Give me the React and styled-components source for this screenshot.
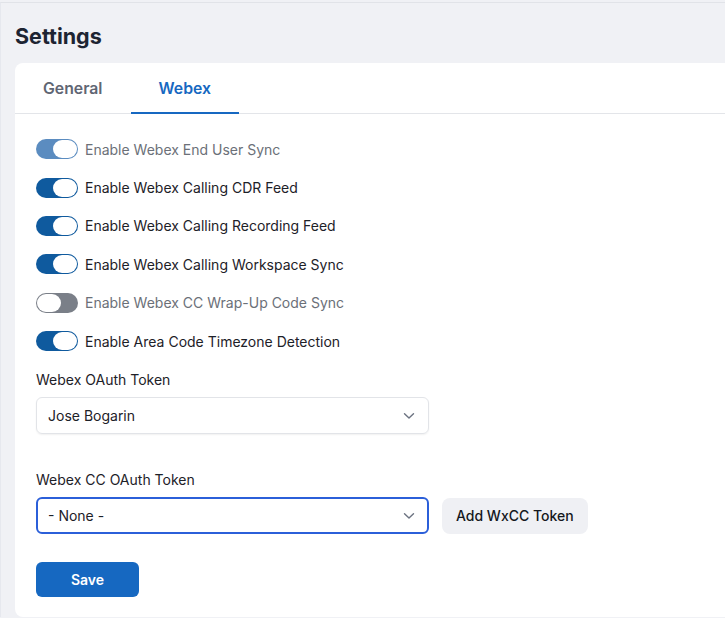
import React from "react";
import styled, { createGlobalStyle } from "styled-components";

const Global = createGlobalStyle`
  html, body { margin: 0; padding: 0; background: #f0f1f5; overflow: hidden; }
  body { font-family: Inter, "Noto Sans", sans-serif; -webkit-font-smoothing: antialiased; }
`;

const Page = styled.div`
  margin-top: 2px;
  border-top: 1px solid #e1e3e8;
  border-left: 1px solid #e6e8ee;
  min-height: 615px;
  padding: 0 0 0 14px;
  box-sizing: border-box;
`;

const Title = styled.h1`
  margin: 0;
  padding-top: 19px;
  height: 41px;
  font-size: 21.5px;
  line-height: 28px;
  font-weight: 700;
  color: #1d2432;
`;

const Card = styled.div`
  background: #fff;
  border-radius: 8px;
  margin-right: -30px;
  height: 554px;
`;

const TabBar = styled.div`
  display: flex;
  height: 50px;
  border-bottom: 1px solid #e3e5e9;
  box-sizing: content-box;
`;

const Tab = styled.div`
  padding: 0 28px;
  display: flex;
  align-items: center;
  font-size: 15.8px;
  font-weight: 600;
  color: ${p => (p.$active ? "#1668c1" : "#5f6673")};
  border-bottom: 2px solid ${p => (p.$active ? "#1668c1" : "transparent")};
  margin-bottom: -1px;
  padding-top: 1px;
`;

const Body = styled.div`
  padding: 16px 0 0 21px;
  display: flex;
  flex-direction: column;
`;

const ToggleRow = styled.div`
  height: 38.4px;
  display: flex;
  align-items: center;
  gap: 7px;
`;

const Track = styled.span`
  position: relative;
  width: 42px;
  height: 20px;
  border-radius: 10px;
  box-sizing: border-box;
  background: ${p => (p.$on ? (p.$muted ? "#5b8cc0" : "#0f5a9e") : "#7a7f88")};
  flex-shrink: 0;
`;

const Knob = styled.span`
  position: absolute;
  top: 1px;
  ${p => (p.$on ? "right: 1px;" : "left: 1px;")}
  width: 24px;
  height: 18px;
  border-radius: 9px;
  background: #fff;
`;

const ToggleLabel = styled.span`
  font-size: 14px;
  color: ${p => (p.$muted ? "#6b7078" : "#1d2128")};
`;

const FieldLabel = styled.div`
  font-size: 14px;
  line-height: 20px;
  color: #1d2128;
  margin-top: ${p => p.$top}px;
`;

const FieldRow = styled.div`
  display: flex;
  align-items: center;
  gap: 13px;
  margin-top: 7px;
`;

const Select = styled.div`
  width: 393px;
  height: 37px;
  box-sizing: border-box;
  border-radius: 6px;
  border: ${p => (p.$focus ? "2px solid #2b5fd9" : "1px solid #e2e4e8")};
  box-shadow: ${p => (p.$focus ? "none" : "0 1px 2px rgba(0,0,0,0.06)")};
  display: flex;
  align-items: center;
  justify-content: space-between;
  padding: 0 ${p => (p.$focus ? 12 : 13)}px 0 ${p => (p.$focus ? 10 : 11)}px;
  font-size: 14px;
  color: #1d2128;
`;

const GrayButton = styled.button`
  height: 36px;
  padding: 0 14px;
  border: none;
  border-radius: 8px;
  background: #eff0f4;
  font-family: inherit;
  font-size: 14px;
  font-weight: 500;
  color: #15181d;
`;

const PrimaryButton = styled.button`
  margin-top: 28px;
  width: 103px;
  height: 35px;
  border: none;
  border-radius: 6px;
  background: #1668c1;
  color: #fff;
  font-family: inherit;
  font-size: 14px;
  font-weight: 600;
`;

const Chevron = () => (
  <svg width="12" height="8" viewBox="0 0 12 8" fill="none">
    <path d="M1.5 1.8 L6 6 L10.5 1.8" stroke="#6b7280" strokeWidth="1.4" strokeLinecap="round" strokeLinejoin="round" />
  </svg>
);

const toggles = [
  { label: "Enable Webex End User Sync", on: true, muted: true },
  { label: "Enable Webex Calling CDR Feed", on: true },
  { label: "Enable Webex Calling Recording Feed", on: true },
  { label: "Enable Webex Calling Workspace Sync", on: true },
  { label: "Enable Webex CC Wrap-Up Code Sync", on: false, muted: true },
  { label: "Enable Area Code Timezone Detection", on: true },
];

export default function App() {
  return (
    <>
      <Global />
      <Page>
        <Title>Settings</Title>
        <Card>
          <TabBar>
            <Tab>General</Tab>
            <Tab $active>Webex</Tab>
          </TabBar>
          <Body>
            {toggles.map(t => (
              <ToggleRow key={t.label}>
                <Track $on={t.on} $muted={t.muted}>
                  <Knob $on={t.on} />
                </Track>
                <ToggleLabel $muted={t.muted}>{t.label}</ToggleLabel>
              </ToggleRow>
            ))}
            <FieldLabel $top={10}>Webex OAuth Token</FieldLabel>
            <FieldRow>
              <Select>
                <span>Jose Bogarin</span>
                <Chevron />
              </Select>
            </FieldRow>
            <FieldLabel $top={36}>Webex CC OAuth Token</FieldLabel>
            <FieldRow>
              <Select $focus>
                <span>- None -</span>
                <Chevron />
              </Select>
              <GrayButton>Add WxCC Token</GrayButton>
            </FieldRow>
            <div>
              <PrimaryButton>Save</PrimaryButton>
            </div>
          </Body>
        </Card>
      </Page>
    </>
  );
}
